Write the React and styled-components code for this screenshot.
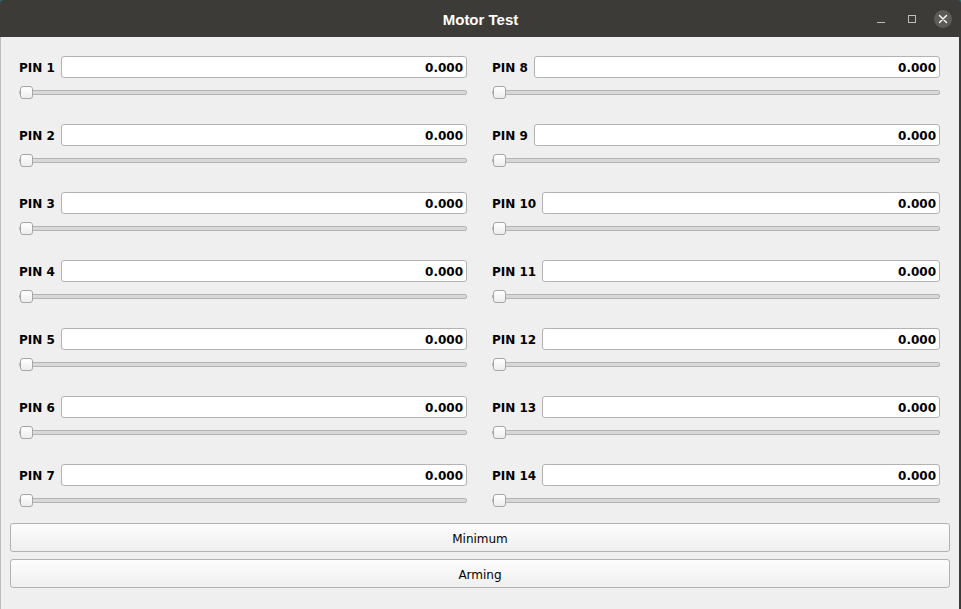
import React from 'react';
import styled, { createGlobalStyle } from 'styled-components';

const GlobalStyle = createGlobalStyle`
  html, body {
    margin: 0;
    padding: 0;
    background: #2b6f72;
  }
  #root {
    width: 961px;
    height: 609px;
  }
`

const Window = styled.div`
  width: 961px;
  height: 609px;
  display: flex;
  flex-direction: column;
  overflow: hidden;
  border-radius: 4px 4px 0 0;
  font-family: "DejaVu Sans", "Liberation Sans", sans-serif;
`
const TitleBar = styled.div`
  position: relative;
  height: 37px;
  flex: none;
  background: #3c3b37;
  display: flex;
  align-items: center;
  justify-content: center;
`
const Title = styled.div`
  color: #ffffff;
  font-family: "Liberation Sans", Arial, sans-serif;
  font-weight: bold;
  font-size: 15px;
  margin-top: 1px;
`
const Controls = styled.div`
  position: absolute;
  right: 9px;
  top: 0;
  height: 37px;
  display: flex;
  align-items: center;
  gap: 13px;
`
const CtrlButton = styled.div`
  width: ${props => props.size || 18}px;
  height: ${props => props.size || 18}px;
  border-radius: 50%;
  background: ${props => props.fill || 'transparent'};
  display: flex;
  align-items: center;
  justify-content: center;
`
const Body = styled.div`
  flex: 1;
  background: #efefef;
  border-left: 1px solid #bcbcbc;
  border-right: 2px solid #3a3a38;
  padding: 19px 9px 0 9px;
  display: flex;
  flex-direction: column;
`
const PinGrid = styled.div`
  display: grid;
  grid-template-columns: 448px 448px;
  column-gap: 25px;
  row-gap: 25px;
  padding: 0 10px 0 9px;
  grid-auto-flow: column;
  grid-template-rows: repeat(7, 43px);
`
const PinCell = styled.div`
  display: flex;
  flex-direction: column;
  gap: 8px;
`
const InputRow = styled.div`
  display: flex;
  align-items: center;
  gap: 6px;
  height: 22px;
`
const Label = styled.span`
  font-weight: bold;
  font-size: 12px;
  color: #000;
  white-space: nowrap;
  padding-top: 2px;
`
const ValueBox = styled.div`
  flex: 1;
  height: 22px;
  box-sizing: border-box;
  background: #ffffff;
  border: 1px solid #b3b3b3;
  border-radius: 3px;
  display: flex;
  align-items: center;
  justify-content: flex-end;
  padding: 2px 3px 0 0;
  font-weight: bold;
  font-size: 12px;
  color: #000;
`
const Slider = styled.div`
  position: relative;
  height: 13px;
  display: flex;
  align-items: center;
`
const Groove = styled.div`
  width: 100%;
  height: 5px;
  box-sizing: border-box;
  background: #d8d8d8;
  border: 1px solid #b4b4b4;
  border-radius: 2px;
`
const Handle = styled.div`
  position: absolute;
  left: 1px;
  top: 0;
  width: 13px;
  height: 13px;
  box-sizing: border-box;
  border: 1px solid #a6a6a6;
  border-radius: 3px;
  background: linear-gradient(#ffffff, #ededed);
`
const Buttons = styled.div`
  margin-top: 16px;
  display: flex;
  flex-direction: column;
  gap: 7px;
`
const PushButton = styled.div`
  height: 29px;
  box-sizing: border-box;
  border: 1px solid #b2b2b2;
  border-radius: 3px;
  background: linear-gradient(#fdfdfd, #efefef);
  display: flex;
  align-items: center;
  justify-content: center;
  padding-top: 2px;
  font-size: 12px;
  color: #000;
`

const PinControl = ({ pin, value }) => (
  <PinCell>
    <InputRow>
      <Label>PIN {pin}</Label>
      <ValueBox>{value}</ValueBox>
    </InputRow>
    <Slider>
      <Groove />
      <Handle />
    </Slider>
  </PinCell>
);

const pins = Array.from({ length: 14 }, (_, i) => i + 1);

const App = () => (
  <Window>
    <GlobalStyle />
    <TitleBar>
      <Title>Motor Test</Title>
      <Controls>
        <CtrlButton>
          <svg width="10" height="10" viewBox="0 0 10 10">
            <path d="M1 8.5h8" stroke="#bdbdbb" strokeWidth="1" />
          </svg>
        </CtrlButton>
        <CtrlButton>
          <svg width="10" height="10" viewBox="0 0 10 10">
            <rect x="1.5" y="1.5" width="7" height="7" fill="none" stroke="#bdbdbb" strokeWidth="1" />
          </svg>
        </CtrlButton>
        <CtrlButton fill="#5d5c58">
          <svg width="10" height="10" viewBox="0 0 10 10">
            <path d="M1.5 1.5l7 7M8.5 1.5l-7 7" stroke="#ffffff" strokeWidth="1.4" strokeLinecap="round" />
          </svg>
        </CtrlButton>
      </Controls>
    </TitleBar>
    <Body>
      <PinGrid>
        {pins.map(pin => (
          <PinControl key={pin} pin={pin} value="0.000" />
        ))}
      </PinGrid>
      <Buttons>
        <PushButton>Minimum</PushButton>
        <PushButton>Arming</PushButton>
      </Buttons>
    </Body>
  </Window>
);

export default App;
